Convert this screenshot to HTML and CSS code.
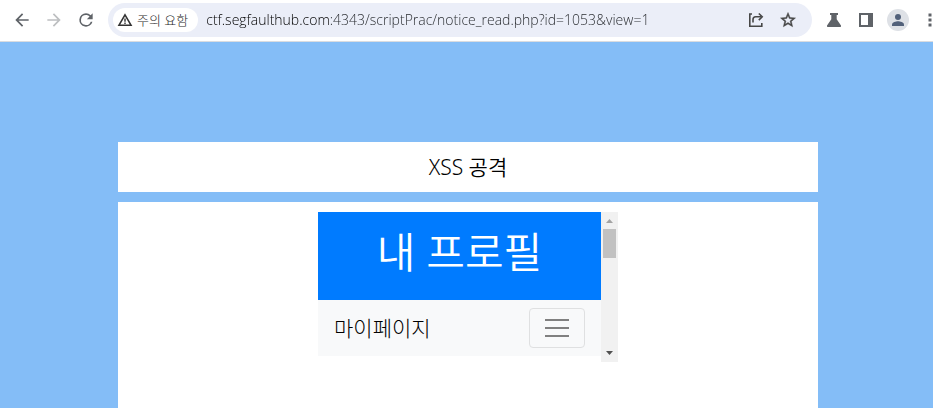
FILE: index.html
```
<!DOCTYPE html>
<html lang="ko">
<head>
  <meta charset="UTF-8">
  <title>XSS 공격</title>
  <meta name="viewport" content="width=device-width, initial-scale=1.0">
  <link rel="stylesheet" href="styles.css">
</head>
<body>
<header class="toolbar">
  <button class="tool" type="button" aria-label="뒤로">
    <svg width="20" height="20" viewBox="0 0 24 24"><path fill="#5f6368" d="M20 11H7.830l5.590-5.590L12 4l-8 8 8 8 1.410-1.410L7.830 13H20z"/></svg>
  </button>
  <button class="tool" type="button" aria-label="앞으로" disabled>
    <svg width="20" height="20" viewBox="0 0 24 24"><path fill="#bdbfc1" d="M12 4l-1.410 1.410L16.170 11H4v2h12.170l-5.580 5.590L12 20l8-8z"/></svg>
  </button>
  <button class="tool" type="button" aria-label="새로고침">
    <svg width="20" height="20" viewBox="0 0 24 24"><path fill="#5f6368" d="M17.650 6.350A7.960 7.960 0 0 0 12 4a8 8 0 1 0 7.730 10h-2.080A6 6 0 1 1 12 6c1.660 0 3.140.690 4.220 1.780L13 11h7V4z"/></svg>
  </button>
  <div class="omnibox">
    <button class="chip" type="button">
      <svg width="16" height="16" viewBox="0 0 16 16"><path fill="none" stroke="#333" stroke-width="1.600" d="M8 2.800L14 13.200H2z"/><path fill="#333" d="M7.300 6.600h1.400v3.200H7.300zM7.300 10.600h1.400V12H7.300z"/></svg>
      <span>주의 요함</span>
    </button>
    <input class="url" type="text" aria-label="주소창" spellcheck="false" value="ctf.segfaulthub.com:4343/scriptPrac/notice_read.php?id=1053&amp;view=1">
    <button class="tool" type="button" aria-label="공유">
      <svg width="16" height="16" viewBox="0 0 16 16"><path fill="none" stroke="#474747" stroke-width="1.600" d="M4 2H1.800v12.200h12V11M5 10.500V7.500Q5 4.800 7.700 4.800H13"/><path fill="none" stroke="#474747" stroke-width="1.600" d="M10.800 1.500L14.200 4.800 10.800 8.100"/></svg>
    </button>
    <button class="tool" type="button" aria-label="북마크">
      <svg width="18" height="18" viewBox="0 0 24 24"><path fill="#474747" stroke="#474747" stroke-width=".6" d="M22 9.240l-7.190-.620L12 2 9.190 8.630 2 9.240l5.460 4.730L5.820 21 12 17.270 18.180 21l-1.630-7.030zM12 15.400l-3.760 2.270 1-4.280-3.320-2.880 4.380-.380L12 6.100l1.710 4.040 4.380.380-3.320 2.880 1 4.280z"/></svg>
    </button>
  </div>
  <div class="extras">
    <button class="tool" type="button" aria-label="실험실">
      <svg width="16" height="16" viewBox="0 0 16 16"><path fill="#5f6368" d="M4 1h8v2h-1.300v4.200L15 13.400Q15.500 15 14 15H2Q.5 15 1 13.400L5.300 7.200V3H4z"/></svg>
    </button>
    <button class="tool" type="button" aria-label="측면 패널">
      <svg width="16" height="16" viewBox="0 0 16 16"><path fill="#5f6368" fill-rule="evenodd" d="M1 1h14v14H1zM3 3v10h7V3z"/></svg>
    </button>
    <button class="tool" type="button" aria-label="프로필">
      <svg width="22" height="22" viewBox="0 0 22 22"><circle cx="11" cy="11" r="11" fill="#dee1e6"/><circle cx="11" cy="8" r="3" fill="#52617a"/><path fill="#52617a" d="M5 17v-1.500c0-2.200 4-3.300 6-3.300s6 1.100 6 3.300V17z"/></svg>
    </button>
    <button class="tool" type="button" aria-label="메뉴">
      <svg width="4" height="14" viewBox="0 0 4 14"><path fill="#5f6368" d="M.5.500h3v3h-3zM.5 5.500h3v3h-3zM.5 10.500h3v3h-3z"/></svg>
    </button>
  </div>
</header>

<main class="page">
  <h1 class="title">XSS 공격</h1>
  <div class="content">
    <div class="frame">
      <div class="frame-page">
        <h2 class="profile">내 프로필</h2>
        <nav class="navbar">
          <a class="brand" href="#">마이페이지</a>
          <button class="toggler" type="button" aria-label="메뉴 열기">
            <svg width="30" height="30" viewBox="0 0 30 30"><path stroke="#808080" stroke-width="2" d="M3 7h24M3 15h24M3 23h24"/></svg>
          </button>
        </nav>
      </div>
      <div class="scrollbar">
        <svg width="17" height="17" viewBox="0 0 17 17"><path fill="#a3a3a3" d="M5 11h7L8.500 7z"/></svg>
        <div class="thumb"></div>
        <svg class="down" width="17" height="17" viewBox="0 0 17 17"><path fill="#505050" d="M5 6h7l-3.500 4z"/></svg>
      </div>
    </div>
  </div>
</main>
</body>
</html>
```
FILE: styles.css
```
* {
  box-sizing: border-box;
}
html, body {
  margin: 0;
  height: 100%;
}
body {
  display: flex;
  flex-direction: column;
  overflow: hidden;
  background: #84bdf7;
  color: #000;
  font-family: "Noto Sans", "Noto Sans CJK KR", sans-serif;
}
button {
  font-family: inherit;
  cursor: pointer;
}
svg {
  display: block;
  flex: none;
}

/* browser toolbar */
.toolbar {
  display: flex;
  align-items: center;
  height: 42px;
  padding: 0 0 2px 6px;
  background: #fff;
  border-bottom: 1px solid #dadce0;
}
.tool {
  display: flex;
  align-items: center;
  justify-content: center;
  flex: none;
  width: 32px;
  height: 32px;
  padding: 0;
  border: 0;
  background: none;
}
.omnibox {
  display: flex;
  align-items: center;
  flex: 1;
  height: 34px;
  margin-left: 6px;
  padding: 0 8px 0 5px;
  border-radius: 17px;
  background: #ebeef8;
}
.chip {
  display: flex;
  align-items: center;
  gap: 4px;
  flex: none;
  height: 24px;
  padding: 0 10px 0 4px;
  border: 0;
  border-radius: 12px;
  background: #fff;
  color: #1f1f1f;
  font-size: 13px;
  font-weight: 300;
}
.url {
  flex: 1;
  min-width: 0;
  margin-left: 8px;
  padding: 0;
  border: 0;
  outline: 0;
  /* host is darker than the path */
  background: linear-gradient(to right, #000 124px, #25282c 124px);
  background-clip: text;
  -webkit-background-clip: text;
  color: transparent;
  font-family: "Open Sans", sans-serif;
  font-size: 14px;
  font-weight: 300;
}
.extras {
  display: flex;
  margin-left: 6px;
  margin-right: -13px;
}

/* page */
.page {
  display: flex;
  flex-direction: column;
  align-items: center;
  flex: 1;
  gap: 10px;
  padding: 100px 0 0 3px;
}
.title {
  width: 100%;
  max-width: 700px;
  margin: 0;
  padding: 10px;
  background: #fff;
  font-size: 21px;
  font-weight: 350;
  line-height: 30px;
  text-align: center;
}
.content {
  display: flex;
  justify-content: center;
  align-items: flex-start;
  flex: 1;
  width: 100%;
  max-width: 700px;
  padding: 10px;
  background: #fff;
}
.frame {
  display: flex;
  width: 300px;
  height: 150px;
}
.frame-page {
  flex: 1;
}
.profile {
  margin: 0;
  padding: 16px 16px 24px;
  background: #007bff;
  color: #fff;
  font-size: 42px;
  font-weight: 350;
  line-height: 48px;
  text-align: center;
}
.navbar {
  display: flex;
  align-items: center;
  justify-content: space-between;
  padding: 8px 16px;
  background: #f8f9fa;
}
.brand {
  color: #000;
  font-size: 21px;
  font-weight: 300;
  line-height: 30px;
  text-decoration: none;
}
.toggler {
  padding: 4px 12px;
  border: 1px solid #dfe0e1;
  border-radius: 4px;
  background: none;
}
.scrollbar {
  display: flex;
  flex-direction: column;
  width: 17px;
  background: #f1f1f1;
}
.thumb {
  height: 29px;
  margin: 0 2px;
  background: #c1c1c1;
}
.down {
  margin-top: auto;
}
```
